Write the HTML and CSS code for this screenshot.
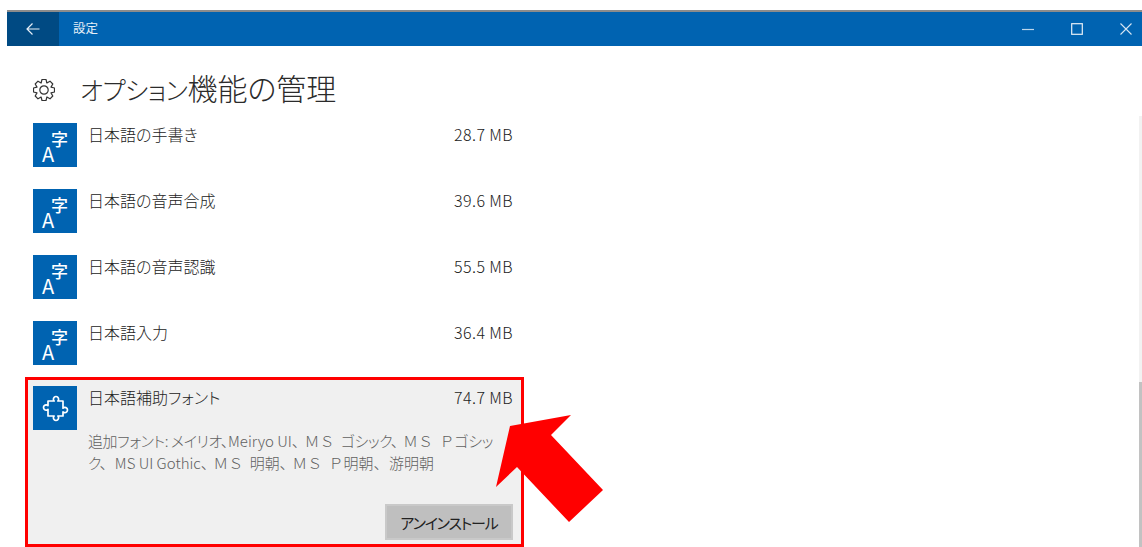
FILE: index.html
```html
<!DOCTYPE html>
<html lang="ja">
<head>
<meta charset="utf-8">
<title>設定</title>
<link rel="stylesheet" href="styles.css">
</head>
<body>
<div class="window">
  <header class="titlebar">
    <button class="back" aria-label="戻る">
      <svg width="16" height="16" viewBox="0 0 16 16"><path d="M14.500 8H2M7.500 2.500 2 8l5.500 5.500" fill="none" stroke="#e6eff7" stroke-width="1.200"/></svg>
    </button>
    <span class="app-name">設定</span>
    <div class="controls">
      <svg width="12" height="12" viewBox="0 0 12 12"><path d="M0 6.500h12" stroke="#bcd6eb" stroke-width="1.200"/></svg>
      <svg width="12" height="12" viewBox="0 0 12 12"><rect x=".7" y=".7" width="10.600" height="10.600" fill="none" stroke="#e6eff7" stroke-width="1.200"/></svg>
      <svg width="12" height="12" viewBox="0 0 12 12"><path d="M.5.500l11 11M11.500.500l-11 11" stroke="#d5e5f2" stroke-width="1.100"/></svg>
    </div>
  </header>

  <div class="page-head">
    <svg class="gear" width="22" height="22" viewBox="0 0 22 22"><polygon points="13,.5 13.900,4 17,2.200 19.800,5 18,8.100 21.500,9 21.500,13 18,13.900 19.800,17 17,19.800 13.900,18 13,21.500 9,21.500 8.100,18 5,19.800 2.200,17 4,13.900 .5,13 .5,9 4,8.100 2.200,5 5,2.200 8.100,4 9,.5" fill="none" stroke="#333" stroke-width="1.200" stroke-linejoin="round"/><circle cx="11" cy="11" r="4.200" fill="none" stroke="#333" stroke-width="1.200"/></svg>
    <h1><span class="kana">オプション</span>機能の管理</h1>
  </div>

  <ul class="features">
    <li class="feature">
      <span class="tile"><span class="tile-a">A</span><span class="tile-ji">字</span></span>
      <div class="info"><div class="row"><span>日本語の手書き</span><span class="size">28.7 MB</span></div></div>
    </li>
    <li class="feature">
      <span class="tile"><span class="tile-a">A</span><span class="tile-ji">字</span></span>
      <div class="info"><div class="row"><span>日本語の音声合成</span><span class="size">39.6 MB</span></div></div>
    </li>
    <li class="feature">
      <span class="tile"><span class="tile-a">A</span><span class="tile-ji">字</span></span>
      <div class="info"><div class="row"><span>日本語の音声認識</span><span class="size">55.5 MB</span></div></div>
    </li>
    <li class="feature">
      <span class="tile"><span class="tile-a">A</span><span class="tile-ji">字</span></span>
      <div class="info"><div class="row"><span>日本語入力</span><span class="size">36.4 MB</span></div></div>
    </li>
    <li class="feature selected">
      <span class="tile">
        <svg width="44" height="44" viewBox="0 0 44 44"><path d="M15 15h6.200a2.600 2.600 0 1 1 3.600 0H30v7.200a2.600 2.600 0 1 1 0 3.600V30h-5.200a2.600 2.600 0 1 1-3.600 0H15v-6.700a2.600 2.600 0 1 1 0-3.600z" fill="none" stroke="#fff" stroke-width="1.700" stroke-linejoin="round"/></svg>
      </span>
      <div class="info">
        <div class="row"><span>日本語補助フォント</span><span class="size">74.7 MB</span></div>
        <p class="details"><span class="tight">追加フォント: メイリオ、</span>Meiryo UI、<span class="wide">ＭＳ </span><span class="tight">ゴシック、</span><span class="wide">ＭＳ Ｐ</span><span class="tight">ゴシック、</span><span class="next">MS UI Gothic、</span><span class="wide">ＭＳ </span>明朝、<span class="wide">ＭＳ Ｐ</span>明朝、<span class="next">游明朝</span></p>
        <div class="actions"><button class="uninstall">アンインストール</button></div>
      </div>
    </li>
  </ul>
</div>

<div class="scroll-track"><div class="scroll-thumb"></div></div>

<svg class="arrow" width="1142" height="547" viewBox="0 0 1142 547"><polygon points="510,426 571,415 551,435 603,490 569,522 517,467 496,487" fill="#ff0000"/></svg>
</body>
</html>
```
FILE: styles.css
```css
* { box-sizing: border-box; }

html, body {
  margin: 0;
  height: 547px;
  overflow: hidden;
  background: #fff;
}

body {
  font-family: "Noto Sans CJK JP", "Open Sans", sans-serif;
  font-feature-settings: "palt";
  color: #222;
}

.window {
  height: 547px;
  overflow: hidden;
  padding: 10px 0 0 7px;
}

.titlebar {
  display: flex;
  align-items: center;
  height: 36px;
  border-top: 2px solid #8c8c8c;
  background: #0063b1;
  color: #e6eff7;
}

.back {
  display: flex;
  align-items: center;
  justify-content: center;
  width: 52px;
  height: 100%;
  padding: 0;
  border: 0;
  background: #004a83;
}

.app-name {
  margin-left: 14px;
  margin-top: -3px;
  font-size: 12.500px;
}

.controls {
  display: flex;
  gap: 37px;
  margin-left: auto;
  padding-right: 10px;
}

.page-head {
  display: flex;
  align-items: center;
  height: 77px;
  padding: 11px 0 0 26px;
}

.gear {
  flex: none;
  margin-right: 25px;
}

.page-head h1 {
  margin: -6px 0 0;
  font-size: 30px;
  font-weight: 300;
  color: #2b2b2b;
}

/* kana sit smaller than kanji in this typeface pairing */
.kana {
  font-size: 25px;
  letter-spacing: -.5px;
}

.features {
  list-style: none;
  width: 499px;
  margin: 0 0 0 18px;
  padding: 0;
}

.feature {
  display: flex;
  gap: 11px;
  height: 66px;
  padding: 0 11px 0 8px;
}

.tile {
  position: relative;
  flex: none;
  width: 44px;
  height: 44px;
  background: #0063b1;
  color: #fff;
}

.tile svg {
  display: block;
}

.tile-a {
  position: absolute;
  left: 9px;
  top: 23px;
  width: 13px;
  height: 15px;
  font-size: 20px;
  line-height: 15px;
}

.tile-ji {
  position: absolute;
  left: 18px;
  top: 9px;
  width: 17px;
  height: 14px;
  font-size: 17px;
  line-height: 14px;
  font-weight: 500;
}

.info {
  flex: 1;
  font-size: 16px;
}

.row {
  display: flex;
  justify-content: space-between;
  line-height: 22px;
  font-weight: 300;
}

.size {
  letter-spacing: .4px;
}

.selected {
  height: 170px;
  margin-top: -10px;
  padding: 6px 8px 0 5px;
  border: 3px solid #f00;
  background: #f0f0f0;
}

.details {
  width: 412px;
  margin: 22px 0 0;
  font-size: 15px;
  font-weight: 300;
  line-height: 22px;
  color: #606060;
}

/* narrower kana runs in the description */
.tight {
  letter-spacing: -.4px;
}

/* full-width latin keeps its full advance and side room */
.wide {
  margin-left: 5px;
  font-feature-settings: normal;
  word-spacing: 3px;
}

.next {
  margin-left: 8px;
}

.actions {
  display: flex;
  justify-content: flex-end;
  margin-top: 30px;
}

.uninstall {
  width: 128px;
  height: 36px;
  padding: 0;
  border: 2px solid #c9c9c9;
  background: #bfbfbf;
  color: #222;
  font: 400 15px "Noto Sans CJK JP", sans-serif;
  font-feature-settings: "palt";
  letter-spacing: -1.200px;
}

.scroll-track {
  position: absolute;
  top: 116px;
  right: 0;
  bottom: 0;
  width: 3px;
  overflow: hidden;
  background: #f2f2f2;
}

.scroll-thumb {
  height: 100%;
  margin-top: 266px;
  background: #c2c2c2;
}

.arrow {
  position: absolute;
  top: 0;
  left: 0;
  pointer-events: none;
}
```
